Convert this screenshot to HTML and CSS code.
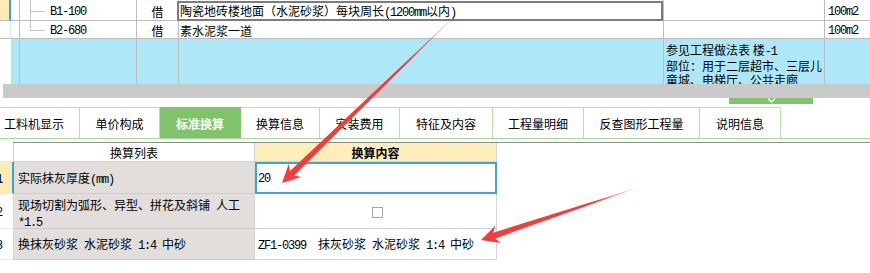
FILE: index.html
```html
<!DOCTYPE html>
<html>
	<head>
		<meta charset="utf-8">
		<title>标准换算</title>
		<link rel="stylesheet" href="styles.css">
	</head>
	<body>
		<div class="page">
			<!-- 定额列表 -->
			<div class="sheet">
				<div class="c mark cur"></div>
				<div class="c"></div>
				<div class="c code twig-mid"><span class="a">B1-100</span></div>
				<div class="c ctr">借</div>
				<div class="c desc edit"><span>陶瓷地砖楼地面（水泥砂浆）每块周长<span class="a">(1200mm</span>以内<span class="a">)</span></span></div>
				<div class="c"></div>
				<div class="c unit"><span class="a">100m2</span></div>

				<div class="c mark"></div>
				<div class="c"></div>
				<div class="c code twig-end"><span class="a">B2-680</span></div>
				<div class="c ctr">借</div>
				<div class="c desc">素水泥浆一道</div>
				<div class="c"></div>
				<div class="c unit"><span class="a">100m2</span></div>

				<div class="c mark blank"></div>
				<div class="c sel"></div>
				<div class="c sel"></div>
				<div class="c sel"></div>
				<div class="c sel"></div>
				<div class="c sel note">参见工程做法表 楼<span class="a">-1</span><br>部位：用于二层超市、三层儿<br>童城、电梯厅、公共走廊</div>
				<div class="c sel"></div>
			</div>
			<div class="hscroll"></div>
			<div class="grip">
				<span class="grip-bar">
					<svg width="9" height="5" viewBox="0 0 9 5"><polyline points="1,0.5 4.5,4 8,0.5" fill="none" stroke="#fff" stroke-width="1.3"/></svg>
				</span>
			</div>

			<!-- 页签 -->
			<div class="tabs">
				<div class="tab">工料机显示</div>
				<div class="tab">单价构成</div>
				<div class="tab on">标准换算</div>
				<div class="tab">换算信息</div>
				<div class="tab">安装费用</div>
				<div class="tab">特征及内容</div>
				<div class="tab">工程量明细</div>
				<div class="tab">反查图形工程量</div>
				<div class="tab">说明信息</div>
			</div>

			<!-- 换算列表 -->
			<div class="calc">
				<div class="k num"></div>
				<div class="k head">换算列表</div>
				<div class="k head hot">换算内容</div>

				<div class="k num cur">1</div>
				<div class="k name"><span>实际抹灰厚度<span class="a">(mm)</span></span></div>
				<div class="k val edit"><span class="a">20</span></div>

				<div class="k num">2</div>
				<div class="k name wrap">现场切割为弧形、异型、拼花及斜铺<span class="a"> </span>人工<br><span class="a">*1.5</span></div>
				<div class="k val mid"><span class="box"></span></div>

				<div class="k num">3</div>
				<div class="k name"><span>换抹灰砂浆<span class="a"> </span>水泥砂浆<span class="a"> 1:4 </span>中砂</span></div>
				<div class="k val"><span><span class="a">ZF1-0399&nbsp; </span>抹灰砂浆<span class="a"> </span>水泥砂浆<span class="a"> 1:4 </span>中砂</span></div>
			</div>

			<!-- 标注箭头 -->
			<svg class="arrows" width="870" height="273" viewBox="0 0 870 273">
				<defs>
					<linearGradient id="fade1" gradientUnits="userSpaceOnUse" x1="462" y1="9" x2="282" y2="183">
						<stop offset="0" stop-color="#f63b3b" stop-opacity="0.05"/>
						<stop offset="0.3" stop-color="#f63b3b"/>
					</linearGradient>
					<linearGradient id="fade2" gradientUnits="userSpaceOnUse" x1="643" y1="186" x2="481" y2="240">
						<stop offset="0" stop-color="#f63b3b" stop-opacity="0.05"/>
						<stop offset="0.3" stop-color="#f63b3b"/>
					</linearGradient>
				</defs>
				<polygon fill="url(#fade1)" points="282,183 288.7,164 290,171.1 462,9 294.2,175.4 301.2,177"/>
				<polygon fill="url(#fade2)" points="481,240 495.2,225.8 493.3,232.7 643,186 495.2,238.4 500.9,242.9"/>
			</svg>
		</div>
	</body>
</html>
```

FILE: styles.css
```css
body {
	margin: 0;
	background: #fff;
	color: #000;
	font: 12px/14px "Noto Sans CJK SC", sans-serif;
	overflow: hidden;
}

.page {
	position: relative;
	width: 870px;
	height: 273px;
}

/* 半角字符 */
.a {
	font-family: "Liberation Mono", monospace;
	font-size: 12px;
	letter-spacing: -1.2px;
	white-space: pre;
}

/* 上部表格 */
.sheet {
	display: grid;
	grid-template-columns: 11px 9px 117px 42px 485px 161px 45px;
	grid-template-rows: 21px 18px 45px;
}

.c {
	box-sizing: border-box;
	display: flex;
	align-items: center;
	padding-top: 3px;
	border-right: 1px solid #bdbdbd;
	border-bottom: 1px solid #bdbdbd;
	white-space: nowrap;
	overflow: hidden;
}

.c:nth-child(7n) {
	border-right: 0;
}

.mark {
	border-right-color: #e4e4e4;
}

.mark.cur {
	background: #fdeab5;
	border-right: 2px solid #39a2da;
}

.mark.blank {
	border-right: 0;
	border-bottom: 0;
}

.code {
	padding-left: 30px;
	--tw: #c8c8c8;
}

.twig-mid {
	background:
		linear-gradient(var(--tw), var(--tw)) 10px 0 / 1px 100% no-repeat,
		linear-gradient(var(--tw), var(--tw)) 10px 11px / 15px 1px no-repeat;
}

.twig-end {
	background:
		linear-gradient(var(--tw), var(--tw)) 10px 0 / 1px 10px no-repeat,
		linear-gradient(var(--tw), var(--tw)) 10px 9px / 15px 1px no-repeat;
}

.ctr {
	justify-content: center;
}

.desc {
	padding-left: 1px;
}

.desc.edit {
	position: relative;
	overflow: visible;
}

.desc.edit::after {
	content: "";
	position: absolute;
	left: -2px;
	right: 0;
	top: 1px;
	bottom: -1px;
	border: 2px solid #7c7c7c;
}

.unit {
	padding-left: 3px;
}

.sel {
	background: #aee8f8;
	border-bottom: 0;
}

.note {
	display: block;
	padding: 4px 0 0 2px;
	white-space: normal;
}

.hscroll {
	height: 14px;
	margin-left: 3px;
	background: #cacaca;
}

.grip {
	height: 9px;
	padding-left: 729px;
}

.grip-bar {
	display: flex;
	justify-content: center;
	width: 84px;
	height: 6px;
	background: #81c36b;
}

.grip-bar svg {
	display: block;
}

/* 页签 */
.tabs {
	display: flex;
	height: 31px;
	border-bottom: 1px solid #a8d898;
}

.tab {
	box-sizing: border-box;
	display: flex;
	align-items: center;
	justify-content: center;
	width: 80px;
	padding-top: 2px;
	border-top: 1px solid #b6e0a6;
	border-right: 1px solid #b6e0a6;
	font-size: 12px;
}

/* 第一个页签左侧被卷出视区 */
.tab:nth-child(1) { padding-right: 11px; }
.tab:nth-child(3) { width: 81px; }
.tab:nth-child(4) { width: 79px; }
.tab:nth-child(6) { width: 93px; }
.tab:nth-child(7) { width: 91px; }
.tab:nth-child(8) { width: 116px; }
.tab:nth-child(9) { width: 81px; }

.tab.on {
	background: #80c36b;
	border-color: #80c36b;
	color: #fff;
	font-weight: bold;
}

/* 换算列表 */
.calc {
	position: relative;
	display: grid;
	grid-template-columns: 14px 241px 242px;
	grid-template-rows: 19px 32px 35px 31px;
	width: max-content;
	margin-top: 3px;
	border-top: 1px solid #8b8b8b;
}

.calc::before {
	content: "";
	position: absolute;
	left: 0;
	top: -1px;
	width: 13px;
	height: 1px;
	background: #fff;
}

.calc::after {
	content: "";
	position: absolute;
	left: 497px;
	top: -1px;
	width: 373px;
	height: 1px;
	background: #8b8b8b;
}

.k {
	box-sizing: border-box;
	display: flex;
	align-items: center;
	padding: 2px 0 0 3px;
	border-right: 1px solid #d3d3d3;
	border-bottom: 1px solid #d3d3d3;
	white-space: nowrap;
	overflow: hidden;
}

.num {
	justify-content: flex-end;
	padding: 2px 10px 0 0;
	border-bottom-color: #e6e6e6;
	font-family: "Liberation Sans", sans-serif;
}

.num.cur {
	background: #fdeab5;
	border-right: 2px solid #39a2da;
	font-weight: bold;
	padding-right: 9px;
}

.head {
	justify-content: center;
	padding-left: 0;
}

.head.hot {
	background: #feefba;
	font-weight: bold;
}

.name {
	background: #e1dedb;
	border-bottom-color: #cfcbc8;
	padding-left: 4px;
}

.wrap {
	display: block;
	padding-top: 4px;
	white-space: normal;
}

.val.edit {
	border: 2px solid #3ea6d6;
	padding-left: 1px;
}

.val.mid {
	justify-content: center;
}

.box {
	width: 9px;
	height: 9px;
	border: 1px solid #a3a3a3;
	background: #fff;
}

.arrows {
	position: absolute;
	left: 0;
	top: 0;
	pointer-events: none;
}
```
